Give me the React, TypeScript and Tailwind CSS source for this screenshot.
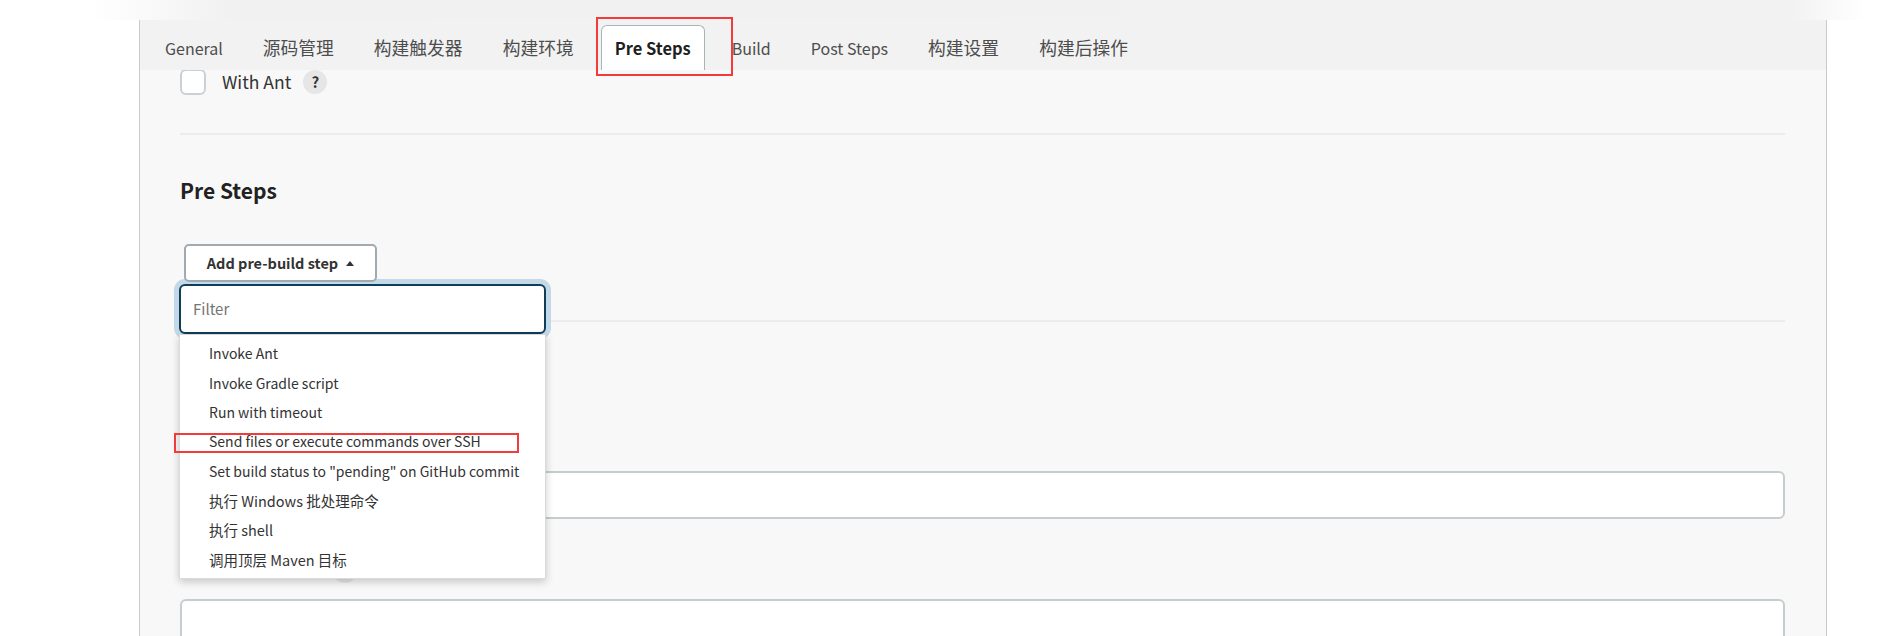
import React from 'react';

// size per tab: Latin labels run wider than the CJK ones in this font
const tabs = [
  { label: 'General', size: 'text-[16px]' },
  { label: '源码管理', size: 'text-[17.75px]' },
  { label: '构建触发器', size: 'text-[17.75px]' },
  { label: '构建环境', size: 'text-[17.75px]' },
  { label: 'Pre Steps', size: 'text-[16.5px]', active: true },
  { label: 'Build', size: 'text-[16px]' },
  { label: 'Post Steps', size: 'text-[16px]' },
  { label: '构建设置', size: 'text-[17.75px]' },
  { label: '构建后操作', size: 'text-[17.75px]' },
];

const steps = [
  'Invoke Ant',
  'Invoke Gradle script',
  'Run with timeout',
  'Send files or execute commands over SSH',
  'Set build status to "pending" on GitHub commit',
  '执行 Windows 批处理命令',
  '执行 shell',
  '调用顶层 Maven 目标',
];

const hasCjk = (s: string) => /[\u4e00-\u9fff]/.test(s);

function HelpIcon() {
  return (
    <span className="inline-flex h-[24px] w-[24px] shrink-0 items-center justify-center rounded-full bg-[#e6e6e6] text-[15px] font-bold text-[#333]">
      ?
    </span>
  );
}

export default function App() {
  return (
    <div className="h-[636px] w-full overflow-hidden bg-white font-['Noto_Sans_CJK_SC',sans-serif] text-[#333]">
      {/* faded header edge */}
      <div className="h-[20px] bg-[linear-gradient(to_right,#fff_90px,#f1f1f1_230px,#f2f2f2_1790px,#fff_1865px)]" />

      <div className="flex h-[616px]">
        <div className="w-[139px] shrink-0" />
        <div className="flex w-[1688px] shrink-0 flex-col border-x border-[#c3ccd1]">
          {/* tabs */}
          <div className="relative z-20 flex h-[50px] shrink-0 items-end gap-[14px] bg-[#f2f2f2] pl-[12px]">
            {tabs.map((t) =>
              t.active ? (
                <div
                  key={t.label}
                  className={`relative flex h-[45px] items-center rounded-t-[6px] border border-b-0 border-[#a9b3ba] bg-white px-[13px] font-bold text-[#1f1f1f] ${t.size}`}
                >
                  {t.label}
                  <div className="absolute left-[-6px] top-[-9px] h-[59px] w-[137px] border-2 border-[#f23b3b]" />
                </div>
              ) : (
                <div key={t.label} className={`flex h-[45px] items-center px-[13px] text-[#4d4d4d] ${t.size}`}>
                  {t.label}
                </div>
              )
            )}
          </div>

          {/* scrolled content */}
          <div className="relative z-10 flex-1 overflow-hidden bg-[#f8f8f8] pl-[40px] pr-[41px]">
            <div className="mt-[-2px] flex h-[28px] items-center">
              <span className="h-[26px] w-[26px] rounded-[6px] border-2 border-[#c9d1d5] bg-white" />
              <span className="ml-[16px] text-[17.5px] leading-[22px]">With Ant</span>
              <span className="ml-[12px] flex">
                <HelpIcon />
              </span>
            </div>

            <div className="mt-[37px] h-[2px] bg-[#ececec]" />

            <h2 className="mt-[40px] h-[30px] text-[21px] font-bold leading-[30px] text-[#222]">Pre Steps</h2>

            <div className="relative ml-[4px] mt-[39px] w-fit">
              <button className="relative z-20 flex h-[38px] w-[193px] items-center justify-center gap-[8px] rounded-[5px] border-2 border-[#a0aab1] bg-white text-[14.5px] font-bold text-[#333]">
                Add pre-build step
                <svg width="8" height="5" viewBox="0 0 8 5">
                  <path d="M0 5 L4 0 L8 5 Z" fill="#333" />
                </svg>
              </button>

              <div className="absolute left-[-5px] top-[40px] z-10 w-[367px]">
                <div className="flex h-[50px] items-center rounded-[6px] border-2 border-[#0f3d5c] bg-white px-[12px] text-[15px] text-[#757575] shadow-[0_0_0_5px_#c3d9e7]">
                  Filter
                </div>
                <ul className="border border-[#dadada] bg-white py-[4px] pl-[29px] shadow-[0_3px_8px_rgba(0,0,0,0.2)]">
                  {steps.map((s, i) => (
                    <li
                      key={s}
                      className={`relative flex h-[29.4px] items-center text-[#333] ${hasCjk(s) ? 'text-[14.5px]' : 'text-[14px]'}`}
                    >
                      {s}
                      {i === 3 && (
                        <div className="absolute left-[-35px] top-[6px] h-[20px] w-[345px] border-2 border-[#f23b3b]" />
                      )}
                    </li>
                  ))}
                </ul>
              </div>
            </div>

            <div className="mt-[38px] h-[2px] bg-[#ececec]" />

            {/* Build section, covered by the open menu */}
            <div className="mt-[40px] h-[30px]" />
            <div className="mt-[40px] h-[22px]" />
            <div className="mt-[17px] h-[48px] rounded-[6px] border-2 border-[#c5cdd1] bg-white" />

            {/* only the bottom of this help badge peeks out under the menu */}
            <div className="mt-[41px] flex h-[22px] items-center pl-[153px]">
              <span className="h-[24px] w-[24px] shrink-0 rounded-full bg-[#e6e6e6]" />
            </div>
            <div className="mt-[17px] h-[80px] rounded-[6px] border-2 border-[#c5cdd1] bg-white" />
          </div>
        </div>
      </div>
    </div>
  );
}
